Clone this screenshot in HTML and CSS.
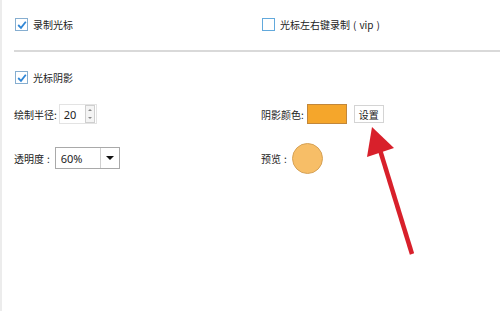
FILE: index.html
```html
<!DOCTYPE html>
<html lang="zh-CN">
    <head>
        <meta charset="UTF-8" />
        <title>光标设置</title>
        <link rel="stylesheet" href="styles.css">
    </head>
    <body>
        <div class="panel">
            <div class="row first">
                <label class="col">
                    <span class="check on">
                        <svg width="10" height="10" viewBox="0 0 10 10"><polyline points="1.2,5 4,7.8 8.8,1.8" /></svg>
                    </span>
                    录制光标
                </label>
                <label class="col">
                    <span class="check"></span>
                    光标左右键录制<span class="paren">(</span>vip<span class="paren">)</span>
                </label>
            </div>

            <div class="sep"></div>

            <div class="row shadow">
                <label class="col">
                    <span class="check on">
                        <svg width="10" height="10" viewBox="0 0 10 10"><polyline points="1.2,5 4,7.8 8.8,1.8" /></svg>
                    </span>
                    光标阴影
                </label>
            </div>

            <div class="row radius">
                <div class="col">
                    <span class="label">绘制半径:</span>
                    <div class="spin">
                        <span class="value">20</span>
                        <span class="arrows">
                            <span class="up"></span>
                            <span class="down"></span>
                        </span>
                    </div>
                </div>
                <div class="col">
                    <span class="label">阴影颜色:</span>
                    <span class="swatch"></span>
                    <button class="set">设置</button>
                </div>
            </div>

            <div class="row opacity">
                <div class="col">
                    <span class="label">透明度<span class="colon">:</span></span>
                    <div class="select">
                        <span class="value">60%</span>
                        <span class="drop"></span>
                    </div>
                </div>
                <div class="col">
                    <span class="label">预览<span class="colon">:</span></span>
                    <span class="preview"></span>
                </div>
            </div>
        </div>

        <!-- 标注箭头 -->
        <svg class="arrow" width="500" height="311" viewBox="0 0 500 311">
            <line x1="412" y1="254" x2="380" y2="150" stroke="#d8202b" stroke-width="4.5" />
            <polygon points="372,127 367,157 394,148" fill="#d8202b" />
        </svg>
    </body>
</html>
```

FILE: styles.css
```css
body {
    margin: 0;
    width: 500px;
    height: 311px;
    background: white;
    font-family: "Noto Sans CJK SC", "Noto Sans", sans-serif;
    font-size: 10px;
    color: #222;
    overflow: hidden;
}
.panel {
    border-left: 2px solid #ececec;
    height: 311px;
    box-sizing: border-box;
    padding-left: 12px;
}
.row {
    display: grid;
    grid-template-columns: 247px 1fr;
    align-items: center;
}
.col {
    display: flex;
    align-items: center;
}
.first {
    padding-top: 13px;
    height: 23px;
}
.sep {
    margin-top: 14px;
    height: 2px;
    background: #d9d9d9;
}
.shadow {
    margin-top: 14px;
    height: 23px;
}
.radius {
    margin-top: 13px;
    height: 24px;
}
.opacity {
    margin-top: 16px;
    height: 32px;
}
.check {
    width: 11px;
    height: 11px;
    border: 1px solid #62a9dc;
    margin: 0 5px 0 1px;
    display: inline-flex;
    align-items: center;
    justify-content: center;
    background: white;
}
.check.on {
    border-color: #86aed0;
}
.check svg polyline {
    fill: none;
    stroke: #2f86d6;
    stroke-width: 1.8;
}
.paren {
    margin: 0 3px;
}
.label {
    margin-right: 2px;
}
.colon {
    margin: 0 3px;
}
.spin {
    width: 38px;
    height: 20px;
    border: 1px solid #e3e3e3;
    box-sizing: border-box;
    display: flex;
    align-items: center;
    justify-content: space-between;
    padding-left: 4px;
}
.spin .value, .select .value {
    font-family: "Noto Sans", sans-serif;
    font-size: 11px;
}
.arrows {
    width: 10px;
    height: 18px;
    border: 1px solid #cfcfcf;
    box-sizing: border-box;
    margin-right: 1px;
    display: flex;
    flex-direction: column;
    align-items: center;
    justify-content: space-around;
    background: #f4f4f4;
}
.up {
    border-left: 2px solid transparent;
    border-right: 2px solid transparent;
    border-bottom: 2px solid #888;
}
.down {
    border-left: 2px solid transparent;
    border-right: 2px solid transparent;
    border-top: 2px solid #888;
}
.swatch {
    width: 40px;
    height: 20px;
    box-sizing: border-box;
    background: #f5a62b;
    border: 1px solid #c2873a;
    margin-left: 1px;
}
.set {
    margin-left: 7px;
    width: 30px;
    height: 18px;
    padding: 0;
    background: white;
    border: 1px solid #d4d4d4;
    font-family: inherit;
    font-size: 10px;
    color: #222;
}
.select {
    width: 65px;
    height: 22px;
    box-sizing: border-box;
    border: 1px solid #a9a9a9;
    display: flex;
    align-items: center;
}
.select .value {
    flex: 1;
    padding-left: 5px;
}
.drop {
    width: 18px;
    height: 20px;
    border-left: 1px solid #d0d0d0;
    display: flex;
    align-items: center;
    justify-content: center;
}
.drop::after {
    content: "";
    border-left: 4px solid transparent;
    border-right: 4px solid transparent;
    border-top: 4px solid #111;
}
.preview {
    width: 31px;
    height: 31px;
    box-sizing: border-box;
    border-radius: 50%;
    background: #f7be67;
    border: 1px solid #d6a257;
}
.arrow {
    position: absolute;
    left: 0;
    top: 0;
    pointer-events: none;
}
```
